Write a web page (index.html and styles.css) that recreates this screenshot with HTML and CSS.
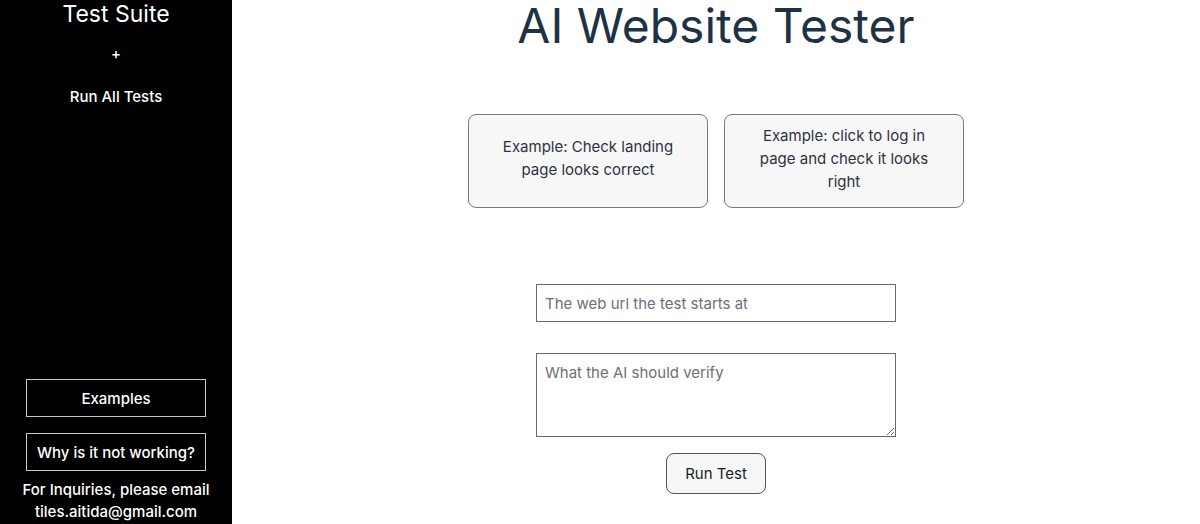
FILE: index.html
```html
<!DOCTYPE html>
<html lang="en">
<head>
<meta charset="utf-8">
<title>AI Website Tester</title>
<link rel="stylesheet" href="styles.css">
</head>
<body>
<div class="app">
  <aside class="sidebar">
    <div class="side-top">
      <h2 class="side-title">Test Suite</h2>
      <div class="side-plus">+</div>
      <div class="side-run">Run All Tests</div>
    </div>
    <div class="side-bottom">
      <button class="side-btn">Examples</button>
      <button class="side-btn">Why is it not working?</button>
      <p class="side-contact">For Inquiries, please email<br>tiles.aitida@gmail.com</p>
    </div>
  </aside>
  <main class="main">
    <h1 class="title">AI Website Tester</h1>
    <div class="examples">
      <div class="example-card">Example: Check landing page looks correct</div>
      <div class="example-card">Example: click to log in page and check it looks right</div>
    </div>
    <form class="test-form">
      <input class="field url-field" type="text" placeholder="The web url the test starts at">
      <textarea class="field verify-field" placeholder="What the AI should verify"></textarea>
      <button type="button" class="run-btn">Run Test</button>
    </form>
  </main>
</div>
</body>
</html>
```

FILE: styles.css
```css
* { box-sizing: border-box; }
html, body { margin: 0; padding: 0; }
body {
  font-family: Inter, "Noto Sans", sans-serif;
  background: #fff;
  overflow: hidden;
}
.app {
  display: flex;
  height: 524px;
}
.sidebar {
  width: 232px;
  flex: none;
  background: #000;
  color: #fff;
  display: flex;
  flex-direction: column;
  justify-content: space-between;
  align-items: center;
  padding-bottom: 1px;
}
.side-top {
  display: flex;
  flex-direction: column;
  align-items: center;
}
.side-title {
  margin: 0;
  font-size: 23px;
  font-weight: 400;
  line-height: 29px;
}
.side-plus {
  margin-top: 14px;
  font-size: 15px;
  line-height: 22px;
  font-weight: 500;
}
.side-run {
  margin-top: 21px;
  font-size: 15px;
  line-height: 22px;
  font-weight: 500;
}
.side-bottom {
  display: flex;
  flex-direction: column;
  align-items: center;
  gap: 16px;
}
.side-btn {
  width: 180px;
  height: 38px;
  background: #000;
  color: #fff;
  border: 1px solid #c8c8c8;
  font-family: Inter, "Noto Sans", sans-serif;
  font-size: 15px;
  font-weight: 500;
  padding: 0;
}
.side-contact {
  margin: -8px 0 0;
  font-size: 15px;
  font-weight: 500;
  line-height: 22px;
  text-align: center;
}
.main {
  flex: 1;
  display: flex;
  flex-direction: column;
  align-items: center;
}
.title {
  margin: 0;
  font-size: 48px;
  font-weight: 400;
  line-height: 52px;
  color: #1e3246;
}
.examples {
  margin-top: 62px;
  display: flex;
  gap: 16px;
}
.example-card {
  width: 240px;
  height: 94px;
  border: 1px solid #7a7a7a;
  border-radius: 8px;
  background: #f7f7f8;
  display: flex;
  align-items: center;
  justify-content: center;
  text-align: center;
  padding: 0 28px 6px;
  font-size: 15px;
  line-height: 23px;
  color: #2d3340;
}
.test-form {
  margin-top: 76px;
  display: flex;
  flex-direction: column;
  align-items: center;
}
.field {
  width: 360px;
  border: 1px solid #6a6a6a;
  border-radius: 0;
  font-family: Inter, "Noto Sans", sans-serif;
  font-size: 15px;
  color: #222;
  padding: 0 8px;
  background: #fff;
}
.field::placeholder { color: #6b7079; }
.url-field {
  height: 38px;
}
.verify-field {
  margin-top: 31px;
  height: 84px;
  padding-top: 9px;
  line-height: 20px;
  resize: vertical;
}
.run-btn {
  margin-top: 16px;
  width: 100px;
  height: 41px;
  border: 1px solid #555;
  border-radius: 8px;
  background: #f7f7f8;
  font-family: Inter, "Noto Sans", sans-serif;
  font-size: 15px;
  color: #1b1f27;
  padding: 0;
}
```
